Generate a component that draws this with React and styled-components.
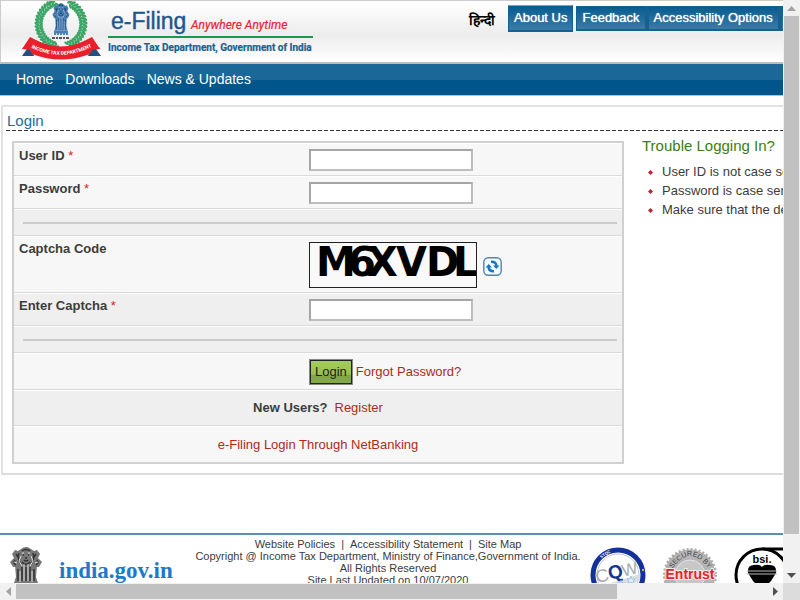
import React from 'react';
import styled, { createGlobalStyle } from 'styled-components';

const GlobalStyle = createGlobalStyle`
  * { box-sizing: border-box; }
  body {
    margin: 0;
    overflow: hidden;
    background: #fff;
    color: #3c3c3c;
    font-family: "Liberation Sans", Arial, sans-serif;
    font-size: 13px;
    line-height: 16px;
  }
  input, button { font: inherit; }
  a { text-decoration: none; color: inherit; }
  svg { display: block; flex: none; }
`;

const Frame = styled.div`
  display: grid;
  grid-template-columns: minmax(0, 1fr) 17px;
  grid-template-rows: minmax(0, 1fr) 17px;
  height: 100vh;
`;
const Viewport = styled.div`
  overflow: hidden;
`;
const Page = styled.div`
  min-width: 980px;
`;
const ScrollTrack = styled.div`
  display: flex;
  flex-direction: ${(p) => (p.$horizontal ? 'row' : 'column')};
  background: #f1f1f1;
`;
const ScrollArrow = styled.div`
  flex: 0 0 16px;
  display: flex;
  align-items: center;
  justify-content: center;
`;
const ScrollRail = styled.div`
  flex: 1;
  display: flex;
  flex-direction: ${(p) => (p.$horizontal ? 'row' : 'column')};
`;
const ScrollThumb = styled.div`
  flex: 0 0 ${(p) => p.$share};
  margin: ${(p) => (p.$horizontal ? '1px 0' : '0 1px')};
  background: #c1c1c1;
`;
const ScrollCorner = styled.div`
  background: #dcdcdc;
`;

const Header = styled.header`
  display: flex;
  height: 64px;
  border: solid #ccc;
  border-width: 1px 0 2px 1px;
  border-bottom-color: #bcbcbc;
  background: linear-gradient(#fff 0%, #f4f4f4 35%, #ececec 55%, #fff 100%);
`;
const Brand = styled.a`
  flex: 0 0 468px;
  padding-left: 18px;
`;
const TopLinks = styled.nav`
  display: flex;
  align-items: flex-start;
  padding-top: 5px;
  color: #fff;
`;
const Hindi = styled.a`
  width: 39px;
  padding-top: 5px;
  color: #000;
  font-size: 14px;
  font-weight: bold;
  line-height: 18px;
`;
const TopButton = styled.a`
  height: ${(p) => (p.$raised ? '27px' : '25px')};
  margin: ${(p) => (p.$raised ? '-1px 3px 0 0' : '0')};
  padding: ${(p) => (p.$raised ? '4px 5px' : '3px 5px')};
  border: 1px solid #16618f;
  border-top-color: ${(p) => (p.$raised ? '#7ba6c2' : '#16618f')};
  border-right-width: ${(p) => (p.$raised ? '1px' : '3px')};
  border-bottom-width: 2px;
  background: linear-gradient(#085c90, #397ba5);
  white-space: nowrap;
  text-shadow: 0 0 1px #fff;
`;
const MainNav = styled.nav`
  display: flex;
  gap: 12px;
  height: 32px;
  padding: 7px 16px;
  border-bottom: 1px solid #a5c4d6;
  background: linear-gradient(#1b6797 0 16px, #00558a 16px);
  color: #fff;
  font-size: 14px;
`;
const Panel = styled.main`
  margin: 9px 1px 0;
  padding: 5px 3px 9px;
  border: 2px solid #e2e2e2;
  border-bottom-color: #ddd;
`;
const Title = styled.h1`
  margin: 0;
  padding: 0 1px;
  color: #16709f;
  font-size: 15px;
  font-weight: normal;
  line-height: 18px;
`;
const DashedRule = styled.div`
  height: 1px;
  background: repeating-linear-gradient(90deg, #333 0 4px, transparent 4px 6px);
`;
const Columns = styled.div`
  display: grid;
  grid-template-columns: 612px 1fr;
  gap: 18px;
  padding: 0 6px;
`;
const Form = styled.form`
  margin-top: 10px;
  border: 2px solid #d0d0d0;
`;
const Row = styled.div`
  display: flex;
  height: ${(p) => p.$height || '33px'};
  align-items: ${(p) => (p.$top ? 'flex-start' : 'center')};
  justify-content: ${(p) => (p.$centered ? 'center' : 'flex-start')};
  gap: ${(p) => (p.$centered ? '7px' : '0')};
  padding: ${(p) => (p.$top ? '5px' : '0 5px')};
  border-top: 1px solid #fff;
  border-bottom: 1px solid #dadada;
  background: ${(p) => (p.$shaded ? '#efefef' : '#f7f7f7')};
  &:last-child { border-bottom: 0; }
`;
const Label = styled.label`
  flex: 0 0 290px;
  font-weight: bold;
  line-height: 14px;
`;
const LabelSpace = styled.span`
  flex: 0 0 290px;
  font-weight: bold;
  line-height: 14px;
`;
const Required = styled.span`
  color: #e02020;
  font-weight: normal;
`;
const TextBox = styled.input`
  width: 164px;
  height: 22px;
  padding: 0 4px;
  border: 2px solid #bebebe;
  border-top-color: #a5a5a5;
  border-left-color: #a5a5a5;
  background: #fff;
`;
const Divider = styled.hr`
  flex: 1;
  height: 2px;
  margin: 0 0 0 4px;
  border: 0;
  background: #cbcbcb;
`;
const CaptchaBox = styled.div`
  width: 168px;
  border: 1px solid #222;
  background: #f9f9f9;
`;
const RefreshButton = styled.button`
  margin: 15px 0 0 6px;
  padding: 0;
  border: 0;
  background: none;
`;
const LoginButton = styled.button`
  height: 26px;
  margin-right: 3px;
  padding: 0 5px;
  border: 1px solid #888;
  outline: 1px solid #222;
  outline-offset: -2px;
  background: linear-gradient(#a5ce5d, #98c050 60%, #7fa445 62%, #85ac4b);
  color: #1b2410;
`;
const RedLink = styled.a`
  color: #ac2c1c;
`;
const Help = styled.aside`
  padding-top: 5px;
`;
const HelpTitle = styled.h2`
  margin: 0 0 6px;
  color: #3b800d;
  font-size: 15px;
  font-weight: normal;
  line-height: 20px;
`;
const HelpList = styled.ul`
  margin: 0;
  padding: 0;
  list-style: none;
`;
const HelpItem = styled.li`
  display: flex;
  align-items: center;
  gap: 9px;
  padding-left: 6px;
  line-height: 19px;
  white-space: nowrap;
`;
const Footer = styled.footer`
  display: flex;
  align-items: flex-start;
  height: 85px;
  margin-top: 58px;
  border-top: 2px solid #5b91b9;
`;
const GovLink = styled.a`
  display: flex;
  flex: 0 0 188px;
  gap: 16px;
  padding: 12px 0 0 10px;
`;
const FooterText = styled.div`
  flex: 0 0 400px;
  padding-top: 3px;
  font-size: 11px;
  line-height: 12px;
  text-align: center;
  white-space: nowrap;
`;
const FooterLinks = styled.div`
  display: flex;
  justify-content: center;
  gap: 6px;
`;
const Badges = styled.div`
  display: flex;
  gap: 16px;
  padding: 12px 0 0 2px;
`;

const leaves = Array.from({ length: 42 }, (_, i) => 100 + i * 8).filter((a) => a < 438 && (a < 254 || a > 286));

const Lions = ({ dark, mid, light }) => (
  <g fill={mid}>
    <path d="M11 2Q16-2 21 2L24 4 27 3 30 7 28 11 32 15 29 20 24 20 23 26H9L8 20H3L0 15 4 11 2 7 5 3 8 4Z" />
    <path d="M5 18H27L26 30 28 36H4L6 30Z" />
    <path d="M3 36H29V40H3Z" />
    <g fill="none" stroke={dark} strokeWidth="1.5">
      <path d="M9 6Q7 12 11 17M23 6Q25 12 21 17M12 4Q16 1 20 4M12 15Q16 20 20 15M12 20V34M16 20V34M20 20V34M6 7L8 10M26 7L24 10M5 13Q3 16 6 18M27 13Q29 16 26 18M8 22V34M24 22V34" />
      <path d="M13 8H14M18 8H19M15 11H17M14 13Q16 15 18 13" />
    </g>
    <path d="M11 9L9 14 12 19M21 9L23 14 20 19M14 17V34M18 17V34M10 24V35M22 24V35M12 6H14M18 6H20M4 15L7 16M28 15L25 16" stroke={light} fill="none" strokeWidth="1" />
  </g>
);

const BrandLogo = () => (
  <svg width="300" height="61" viewBox="19 1 300 61" role="img" aria-label="e-Filing Anywhere Anytime, Income Tax Department, Government of India">
    <g fill="#3ba566">
      {leaves.map((a) => (
        <g key={a} transform={`translate(61 24) rotate(${a})`}>
          <ellipse cx="24" cy="0" rx="3" ry="1.5" transform="rotate(38 24 0)" />
          <ellipse cx="20" cy="2" rx="2.6" ry="1.3" transform="rotate(-38 20 2)" />
        </g>
      ))}
    </g>
    <g transform="translate(52.500 3) scale(.53 .76)">
      <Lions dark="#174c83" mid="#4a7db0" light="#b1cde5" />
    </g>
    <path d="M54 34H68" stroke="#3d8ac1" strokeWidth="2" strokeDasharray="2 1" />
    <path d="M52 38H70" stroke="#555" strokeWidth="2" strokeDasharray="3 1 2 1" />
    <path d="M22 56L27 49 22 48 31 46 34 56ZM101 56L96 49 101 48 92 46 88 56Z" fill="#23507f" />
    <path d="M22 49L30 37 36 40Q61 53 86 40L92 37 100 49 92 50 90 54Q61 65 32 54L30 50Z" fill="#e9202b" />
    <path id="ribbonArc" d="M26 45Q61 65 97 44" fill="none" />
    <text fontFamily="Roboto, Liberation Sans, sans-serif" fontSize="5" fontWeight="bold" fill="#fff">
      <textPath href="#ribbonArc" startOffset="50%" textAnchor="middle">INCOME TAX DEPARTMENT</textPath>
    </text>
    <text x="111" y="29" fontFamily="Liberation Sans, sans-serif" fontSize="23" fill="#20568f" stroke="#20568f" strokeWidth=".4">e-Filing</text>
    <text x="191" y="29" fontFamily="Roboto, Liberation Sans, sans-serif" fontSize="12" fontStyle="italic" fill="#ed2330" stroke="#ed2330" strokeWidth=".2">Anywhere Anytime</text>
    <path d="M108 37H313" stroke="#159a50" strokeWidth="2" />
    <text x="108" y="51" fontFamily="Roboto, Liberation Sans, sans-serif" fontSize="10" fontWeight="bold" fill="#1b6090" stroke="#1b6090" strokeWidth=".2">Income Tax Department, Government of India</text>
  </svg>
);

const CaptchaImage = () => (
  <svg width="166" height="44" viewBox="0 0 166 44" role="img" aria-label="Captcha">
    <text x="6 38 57 86 116 143" y="33" fontFamily="DejaVu Sans, sans-serif" fontWeight="bold" fontSize="40" fill="#000">M6XVDL</text>
  </svg>
);

const RefreshIcon = () => (
  <svg width="19" height="19" viewBox="0 0 19 19" fill="none">
    <rect x=".8" y=".8" width="17.4" height="17.4" rx="4.500" fill="#f4f9fd" stroke="#4e85b8" strokeWidth="1.4" />
    <path d="M13.500 9Q13 4.500 8 4.800" stroke="#1b75bd" strokeWidth="2.400" />
    <path d="M5.500 10Q6 14.500 11 14.200" stroke="#1b75bd" strokeWidth="2.400" />
    <path d="M10 8.500H16.500L13.300 12ZM2.500 10.500H9L5.700 7Z" fill="#1b75bd" />
  </svg>
);

const CqwBadge = () => (
  <svg width="56" height="56" viewBox="0 0 56 56">
    <circle cx="28" cy="28" r="25" fill="#fff" stroke="#14309b" strokeWidth="5" />
    <circle cx="28" cy="28" r="21" fill="none" stroke="#bcc4d8" />
    <path id="stqcArc" d="M8 16Q17 3 32 4" fill="none" />
    <text fontFamily="Liberation Sans, sans-serif" fontSize="4" fontWeight="bold" fill="#fff"><textPath href="#stqcArc" startOffset="20%">STQC</textPath></text>
    <path d="M11 39L50 27V34L20 44Z" fill="#dadddf" />
    <g transform="rotate(-14 28 29)" fontFamily="Liberation Sans, sans-serif">
      <text x="6" y="31" fontSize="18" fill="#aaa">C</text>
      <text x="19" y="31" fontSize="19" fontWeight="bold" fill="#173590">Q</text>
      <text x="33" y="31" fontSize="17" fill="#aaa">W</text>
    </g>
    <path d="M31 33L32 36 35 36 33 38 34 41 31 39 28 41 29 38 27 36 30 36ZM41 29L42 32 45 32 43 34 44 37 41 35 38 37 39 34 37 32 40 32Z" fill="#e4f1ff" stroke="#8cb7e7" strokeWidth=".7" />
    <circle cx="53" cy="23" r="1" fill="#fff200" />
  </svg>
);

const EntrustBadge = () => (
  <svg width="56" height="56" viewBox="0 0 56 56">
    <circle cx="28" cy="28" r="25.500" fill="#b5b5b5" stroke="#aaa" strokeWidth="3" strokeDasharray="2 2" />
    <circle cx="28" cy="28" r="15" fill="#c7c7c7" stroke="#e3e3e3" />
    <path id="securedArc" d="M9 24Q28-6 48 24" fill="none" />
    <text fontFamily="Liberation Sans, sans-serif" fontSize="7" fill="#444"><textPath href="#securedArc" startOffset="50%" textAnchor="middle">SECURED BY</textPath></text>
    <text x="28" y="32" textAnchor="middle" fontFamily="Liberation Sans, sans-serif" fontWeight="bold" fontSize="14" fill="#ef1d24" stroke="#eee" strokeWidth="2" paintOrder="stroke">Entrust</text>
    <text x="28" y="41" textAnchor="middle" fontFamily="Liberation Sans, sans-serif" fontSize="6" fill="#666">SSL</text>
  </svg>
);

const BsiBadge = () => (
  <svg width="90" height="56" viewBox="0 0 90 56">
    <path d="M28 2H90V54H28" fill="#fff" stroke="#000" strokeWidth="3" />
    <circle cx="28" cy="28" r="26" fill="#fff" stroke="#000" strokeWidth="3" />
    <text x="28" y="16" textAnchor="middle" fontFamily="Liberation Sans, sans-serif" fontWeight="bold" fontSize="11" fill="#000">bsi.</text>
    <path d="M14 26Q13 18 20 18 26 17 28 20 30 17 36 18 43 18 42 26L37 34 28 43 19 34Z" fill="#000" />
    <path d="M13 24H43M13 27H43" stroke="#bbb" strokeWidth="1" />
  </svg>
);

const Arrow = ({ d, fill }) => <svg width="9" height="9" viewBox="0 0 9 9"><path d={d} fill={fill} /></svg>;

const Field = ({ id, label, type = 'text', shaded }) => (
  <Row $top $shaded={shaded}>
    <Label htmlFor={id}>{label} <Required>*</Required></Label>
    <TextBox id={id} type={type} />
  </Row>
);

const hints = [
  'User ID is not case sensitive.',
  'Password is case sensitive.',
  'Make sure that the details are entered correctly.',
];

export default function App() {
  return (
    <Frame>
      <GlobalStyle />
      <Viewport>
        <Page>
          <Header>
            <Brand href="#"><BrandLogo /></Brand>
            <TopLinks>
              <Hindi href="#" lang="hi">हिन्दी</Hindi>
              <TopButton href="#" $raised>About Us</TopButton>
              <TopButton href="#">Feedback</TopButton>
              <TopButton href="#">Accessibility Options</TopButton>
              <TopButton href="#">Contact Us</TopButton>
            </TopLinks>
          </Header>
          <MainNav>
            <a href="#">Home</a>
            <a href="#">Downloads</a>
            <a href="#">News &amp; Updates</a>
          </MainNav>
          <Panel>
            <Title>Login</Title>
            <DashedRule />
            <Columns>
              <Form onSubmit={(e) => e.preventDefault()}>
                <Field id="user" label="User ID" />
                <Field id="password" label="Password" type="password" />
                <Row $shaded $height="27px"><Divider /></Row>
                <Row $top $height="57px">
                  <LabelSpace>Captcha Code</LabelSpace>
                  <CaptchaBox><CaptchaImage /></CaptchaBox>
                  <RefreshButton type="button" aria-label="Refresh captcha"><RefreshIcon /></RefreshButton>
                </Row>
                <Field id="captcha" label="Enter Captcha" shaded />
                <Row $shaded $height="27px"><Divider /></Row>
                <Row $height="37px">
                  <LabelSpace />
                  <LoginButton type="submit">Login</LoginButton>
                  <RedLink href="#">Forgot Password?</RedLink>
                </Row>
                <Row $shaded $centered $height="36px">
                  <strong>New Users?</strong>
                  <RedLink href="#">Register</RedLink>
                </Row>
                <Row $centered $height="36px">
                  <RedLink href="#">e-Filing Login Through NetBanking</RedLink>
                </Row>
              </Form>
              <Help>
                <HelpTitle>Trouble Logging In?</HelpTitle>
                <HelpList>
                  {hints.map((hint) => (
                    <HelpItem key={hint}>
                      <svg width="5" height="9" viewBox="0 0 5 9"><path d="M2.500 3L5 5.500 2.500 8 0 5.500Z" fill="#b5272f" /></svg>
                      {hint}
                    </HelpItem>
                  ))}
                </HelpList>
              </Help>
            </Columns>
          </Panel>
          <Footer>
            <GovLink href="#">
              <svg width="33" height="41" viewBox="0 0 33 41"><Lions dark="#333" mid="#777" light="#ddd" /></svg>
              <svg width="120" height="44" viewBox="0 0 120 44" role="img" aria-label="india.gov.in">
                <text x="0" y="31" fontFamily="Liberation Serif, serif" fontWeight="bold" fontSize="23" fill="#1c79cc">india.gov.in</text>
              </svg>
            </GovLink>
            <FooterText>
              <FooterLinks>
                <a href="#">Website Policies</a><span>|</span>
                <a href="#">Accessibility Statement</a><span>|</span>
                <a href="#">Site Map</a>
              </FooterLinks>
              <div>Copyright @ Income Tax Department, Ministry of Finance,Government of India.</div>
              <div>All Rights Reserved</div>
              <div>Site Last Updated on 10/07/2020</div>
            </FooterText>
            <Badges>
              <CqwBadge />
              <EntrustBadge />
              <BsiBadge />
            </Badges>
          </Footer>
        </Page>
      </Viewport>
      <ScrollTrack>
        <ScrollArrow><Arrow d="M0 7L4.500 2 9 7Z" fill="#a3a3a3" /></ScrollArrow>
        <ScrollRail><ScrollThumb $share="94%" /></ScrollRail>
        <ScrollArrow><Arrow d="M0 2L4.500 7 9 2Z" fill="#505050" /></ScrollArrow>
      </ScrollTrack>
      <ScrollTrack $horizontal>
        <ScrollArrow><Arrow d="M7 0L2 4.500 7 9Z" fill="#a3a3a3" /></ScrollArrow>
        <ScrollRail $horizontal><ScrollThumb $horizontal $share="80%" /></ScrollRail>
        <ScrollArrow><Arrow d="M2 0L7 4.500 2 9Z" fill="#505050" /></ScrollArrow>
      </ScrollTrack>
      <ScrollCorner />
    </Frame>
  );
}
